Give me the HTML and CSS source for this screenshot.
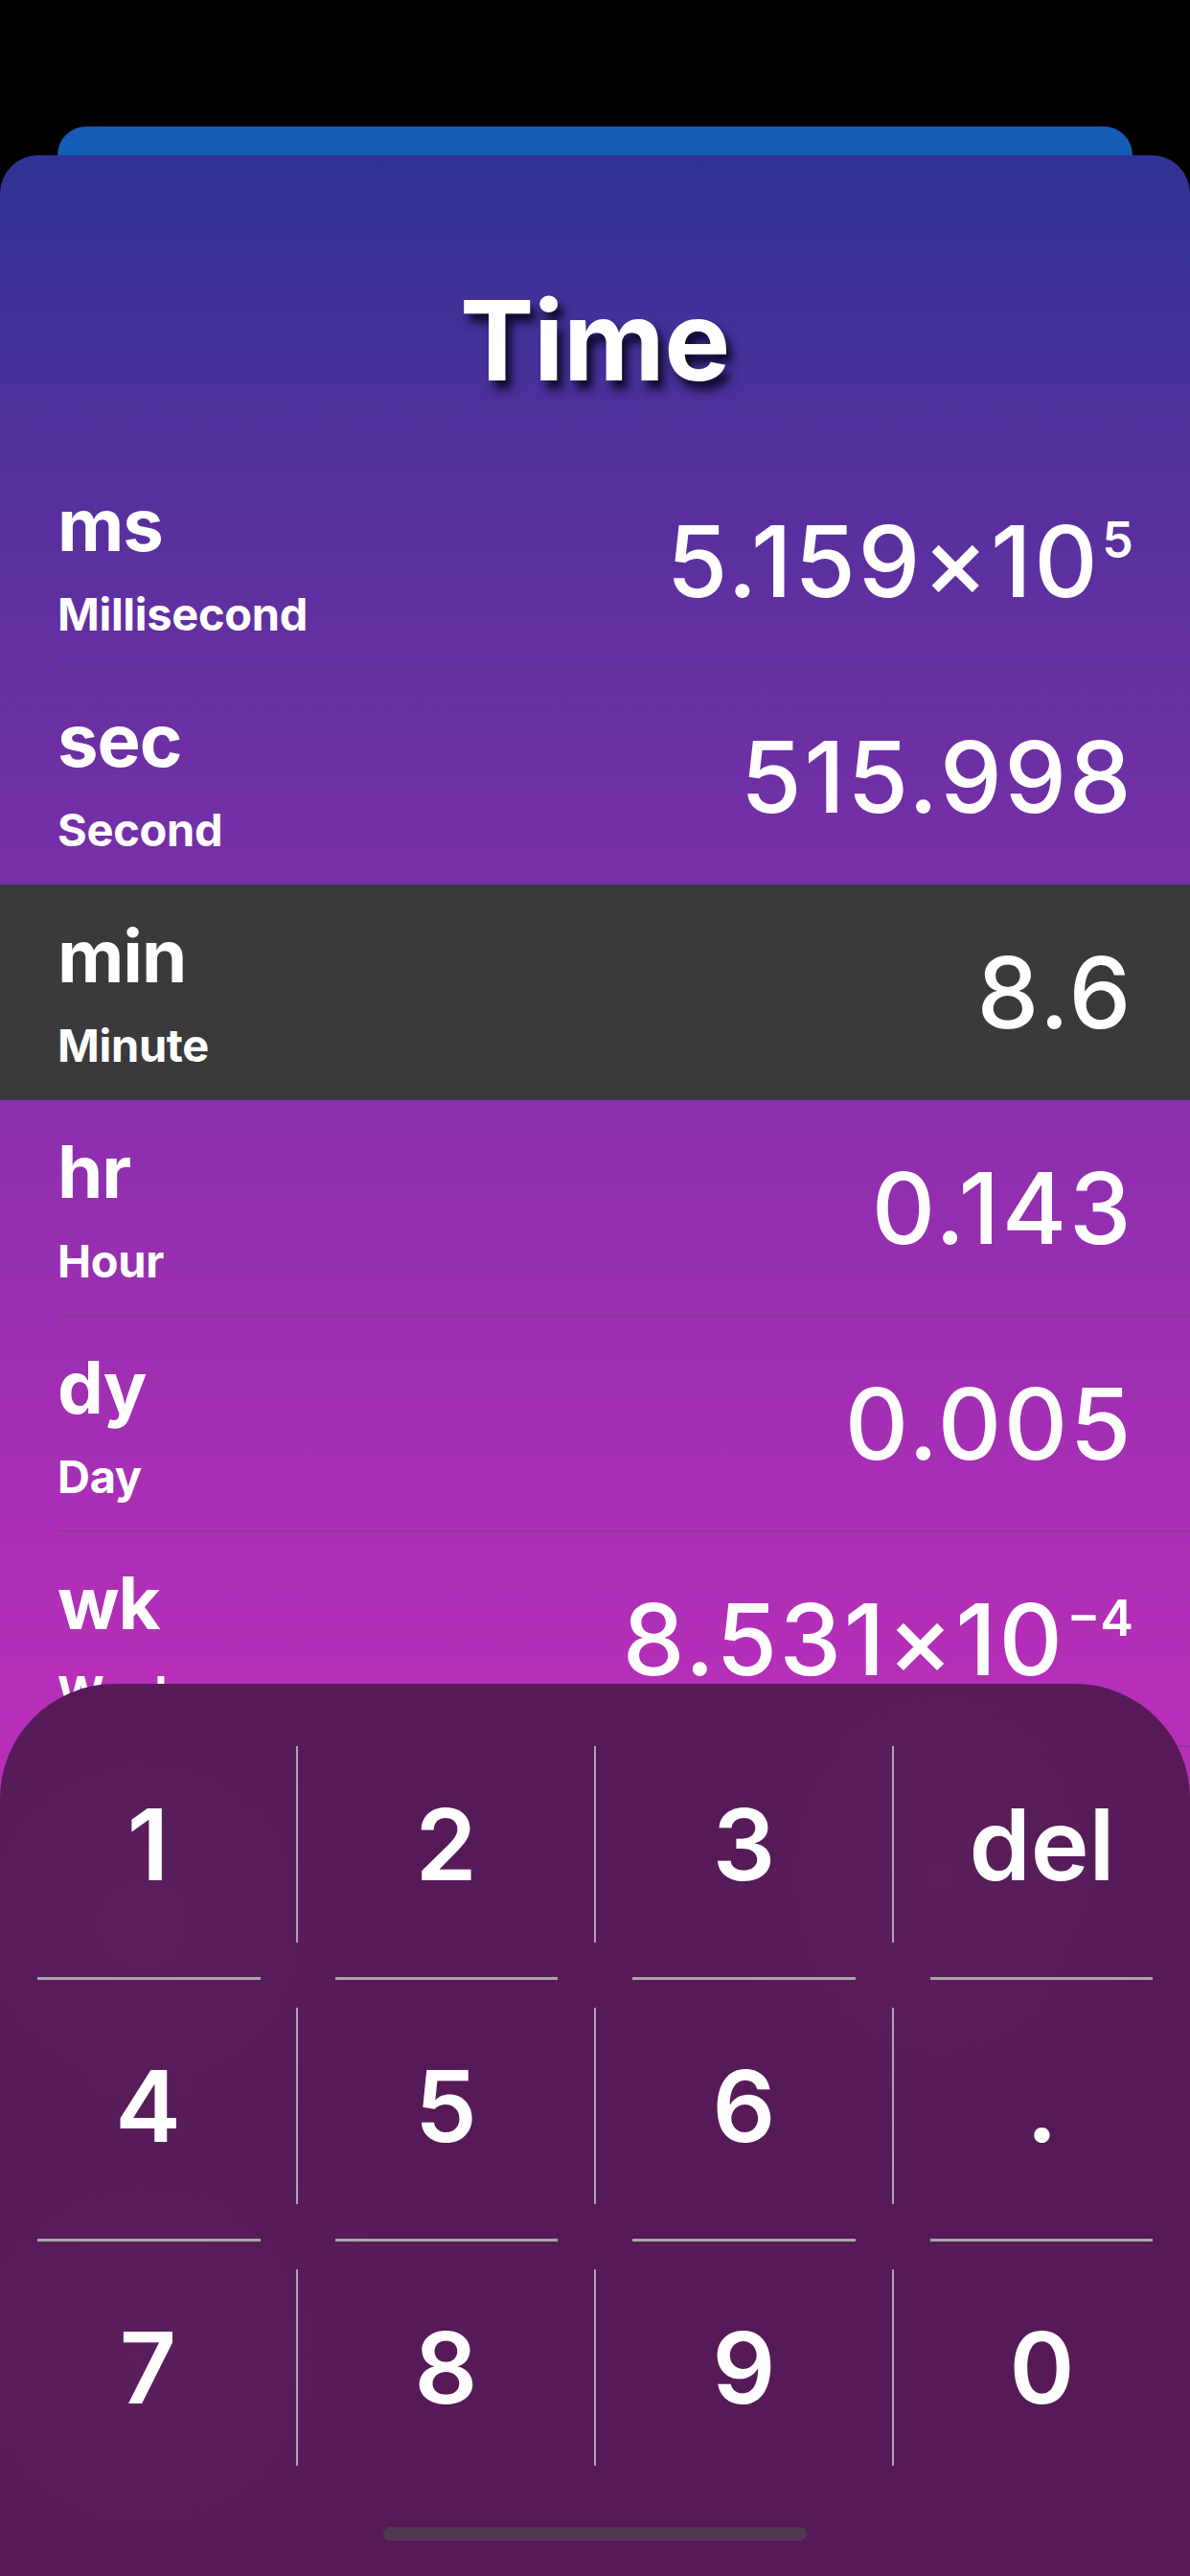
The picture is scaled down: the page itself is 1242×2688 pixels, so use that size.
FILE: index.html
```html
<!doctype html>
<html lang="en">
 <head>
  <meta charset="UTF-8">
  <title>Units - Time</title>
  <meta name="viewport" content="width=device-width, initial-scale=1.0">
  <link rel="stylesheet" href="styles.css">
 </head>
 <body>
  <div class="screen">
   <div class="status"></div>
   <div class="back-card"></div>
   <main class="card">
    <h1 class="title">Time</h1>
    <ul class="units">
     <li class="unit">
      <div class="unit-inner">
       <div class="labels"><span class="abbr">ms</span><span class="name">Millisecond</span></div>
       <div class="value">5.159×10<sup>5</sup></div>
      </div>
     </li>
     <li class="unit before-active">
      <div class="unit-inner">
       <div class="labels"><span class="abbr">sec</span><span class="name">Second</span></div>
       <div class="value">515.998</div>
      </div>
     </li>
     <li class="unit active">
      <div class="unit-inner">
       <div class="labels"><span class="abbr">min</span><span class="name">Minute</span></div>
       <div class="value">8.6</div>
      </div>
     </li>
     <li class="unit">
      <div class="unit-inner">
       <div class="labels"><span class="abbr">hr</span><span class="name">Hour</span></div>
       <div class="value">0.143</div>
      </div>
     </li>
     <li class="unit">
      <div class="unit-inner">
       <div class="labels"><span class="abbr">dy</span><span class="name">Day</span></div>
       <div class="value">0.005</div>
      </div>
     </li>
     <li class="unit">
      <div class="unit-inner">
       <div class="labels"><span class="abbr">wk</span><span class="name">Week</span></div>
       <div class="value">8.531×10<sup>−4</sup></div>
      </div>
     </li>
    </ul>
   </main>

   <div class="keypad">
    <div class="key-row">
     <button class="key">1</button><button class="key">2</button><button class="key">3</button><button class="key">del</button>
    </div>
    <div class="divider-row"><span></span><span></span><span></span><span></span></div>
    <div class="key-row">
     <button class="key">4</button><button class="key">5</button><button class="key">6</button><button class="key">.</button>
    </div>
    <div class="divider-row"><span></span><span></span><span></span><span></span></div>
    <div class="key-row">
     <button class="key">7</button><button class="key">8</button><button class="key">9</button><button class="key">0</button>
    </div>
    <div class="home-bar"></div>
   </div>
  </div>
 </body>
</html>
```

FILE: styles.css
```css
:root {
  --back-card: #165cb6;
  --row-active: #3a3a3c;
  --separator: rgba(84, 84, 88, 0.75);
  --keypad: #561a58;
  --key-line: #a8a6a8;
  --text: #ffffff;
}

* {
  box-sizing: border-box;
}

body {
  margin: 0;
  background: #000;
  font-family: 'Inter', 'Noto Sans', sans-serif;
  color: var(--text);
}

.screen {
  position: relative;
  width: 1242px;
  height: 2688px;
  overflow: hidden;
  background: #000;
}

.status {
  height: 132px;
}

.back-card {
  height: 30px;
  margin: 0 60px;
  background: var(--back-card);
  border-radius: 30px 30px 0 0;
}

.card {
  height: 2526px;
  border-radius: 40px 40px 0 0;
  background: linear-gradient(180deg,
    #303396 0px,
    #52309c 318px,
    #782fa8 758px,
    #9b2fb2 1208px,
    #b62fb9 1595px,
    #c32fbd 2526px);
}

.title {
  margin: 0;
  height: 311px;
  padding-top: 135px;
  font-size: 116px;
  line-height: 1;
  font-weight: 700;
  text-align: center;
  letter-spacing: -0.5px;
  text-shadow: 6px 9px 10px rgba(8, 6, 30, 0.9);
}

.units {
  list-style: none;
  margin: 0;
  padding: 0;
}

.unit {
  padding-left: 60px;
}

.unit.active {
  background: var(--row-active);
}

.unit-inner {
  display: flex;
  align-items: center;
  justify-content: space-between;
  height: 225px;
  padding-right: 59px;
  border-bottom: 1px solid var(--separator);
}

.unit.active .unit-inner,
.unit.before-active .unit-inner {
  border-bottom-color: transparent;
}

.labels {
  display: flex;
  flex-direction: column;
  gap: 21px;
}

.abbr {
  font-size: 76px;
  line-height: 90px;
  font-weight: 700;
  letter-spacing: -1px;
}

.name {
  font-size: 47px;
  line-height: 56px;
  font-weight: 700;
  letter-spacing: -0.3px;
}

.value {
  font-size: 103px;
  font-weight: 500;
  letter-spacing: 2.5px;
  white-space: nowrap;
}

.value sup {
  font-size: 52px;
  font-weight: 600;
  vertical-align: 41px;
  line-height: 0;
  letter-spacing: 0;
  margin-left: 2px;
}

/* number pad sheet, lies over the unit list */
.keypad {
  position: absolute;
  left: 0;
  right: 0;
  bottom: 0;
  height: 931px;
  padding-top: 65px;
  border-radius: 120px 120px 0 0;
  background:
    radial-gradient(ellipse 260px 260px at 150px 250px, rgba(100, 40, 100, 0.35), transparent),
    radial-gradient(ellipse 260px 320px at 980px 200px, rgba(100, 40, 100, 0.3), transparent),
    radial-gradient(ellipse 300px 300px at 150px 700px, rgba(100, 40, 100, 0.3), transparent),
    var(--keypad);
}

.key-row {
  display: flex;
  height: 205px;
}

.key {
  flex: 1;
  display: flex;
  align-items: center;
  justify-content: center;
  padding: 0;
  border: none;
  border-right: 2px solid var(--key-line);
  background: none;
  color: var(--text);
  font-family: 'Inter', 'Noto Sans', sans-serif;
  font-size: 103px;
  font-weight: 600;
}

.key:last-child {
  border-right: none;
}

.divider-row {
  display: flex;
  height: 68px;
  padding-top: 36px;
}

.divider-row span {
  flex: 1;
  height: 3px;
  margin: 0 39px;
  background: var(--key-line);
}

.home-bar {
  width: 442px;
  height: 14px;
  margin: 64px auto 0;
  border-radius: 7px;
  background: #4f3a52;
}
```
